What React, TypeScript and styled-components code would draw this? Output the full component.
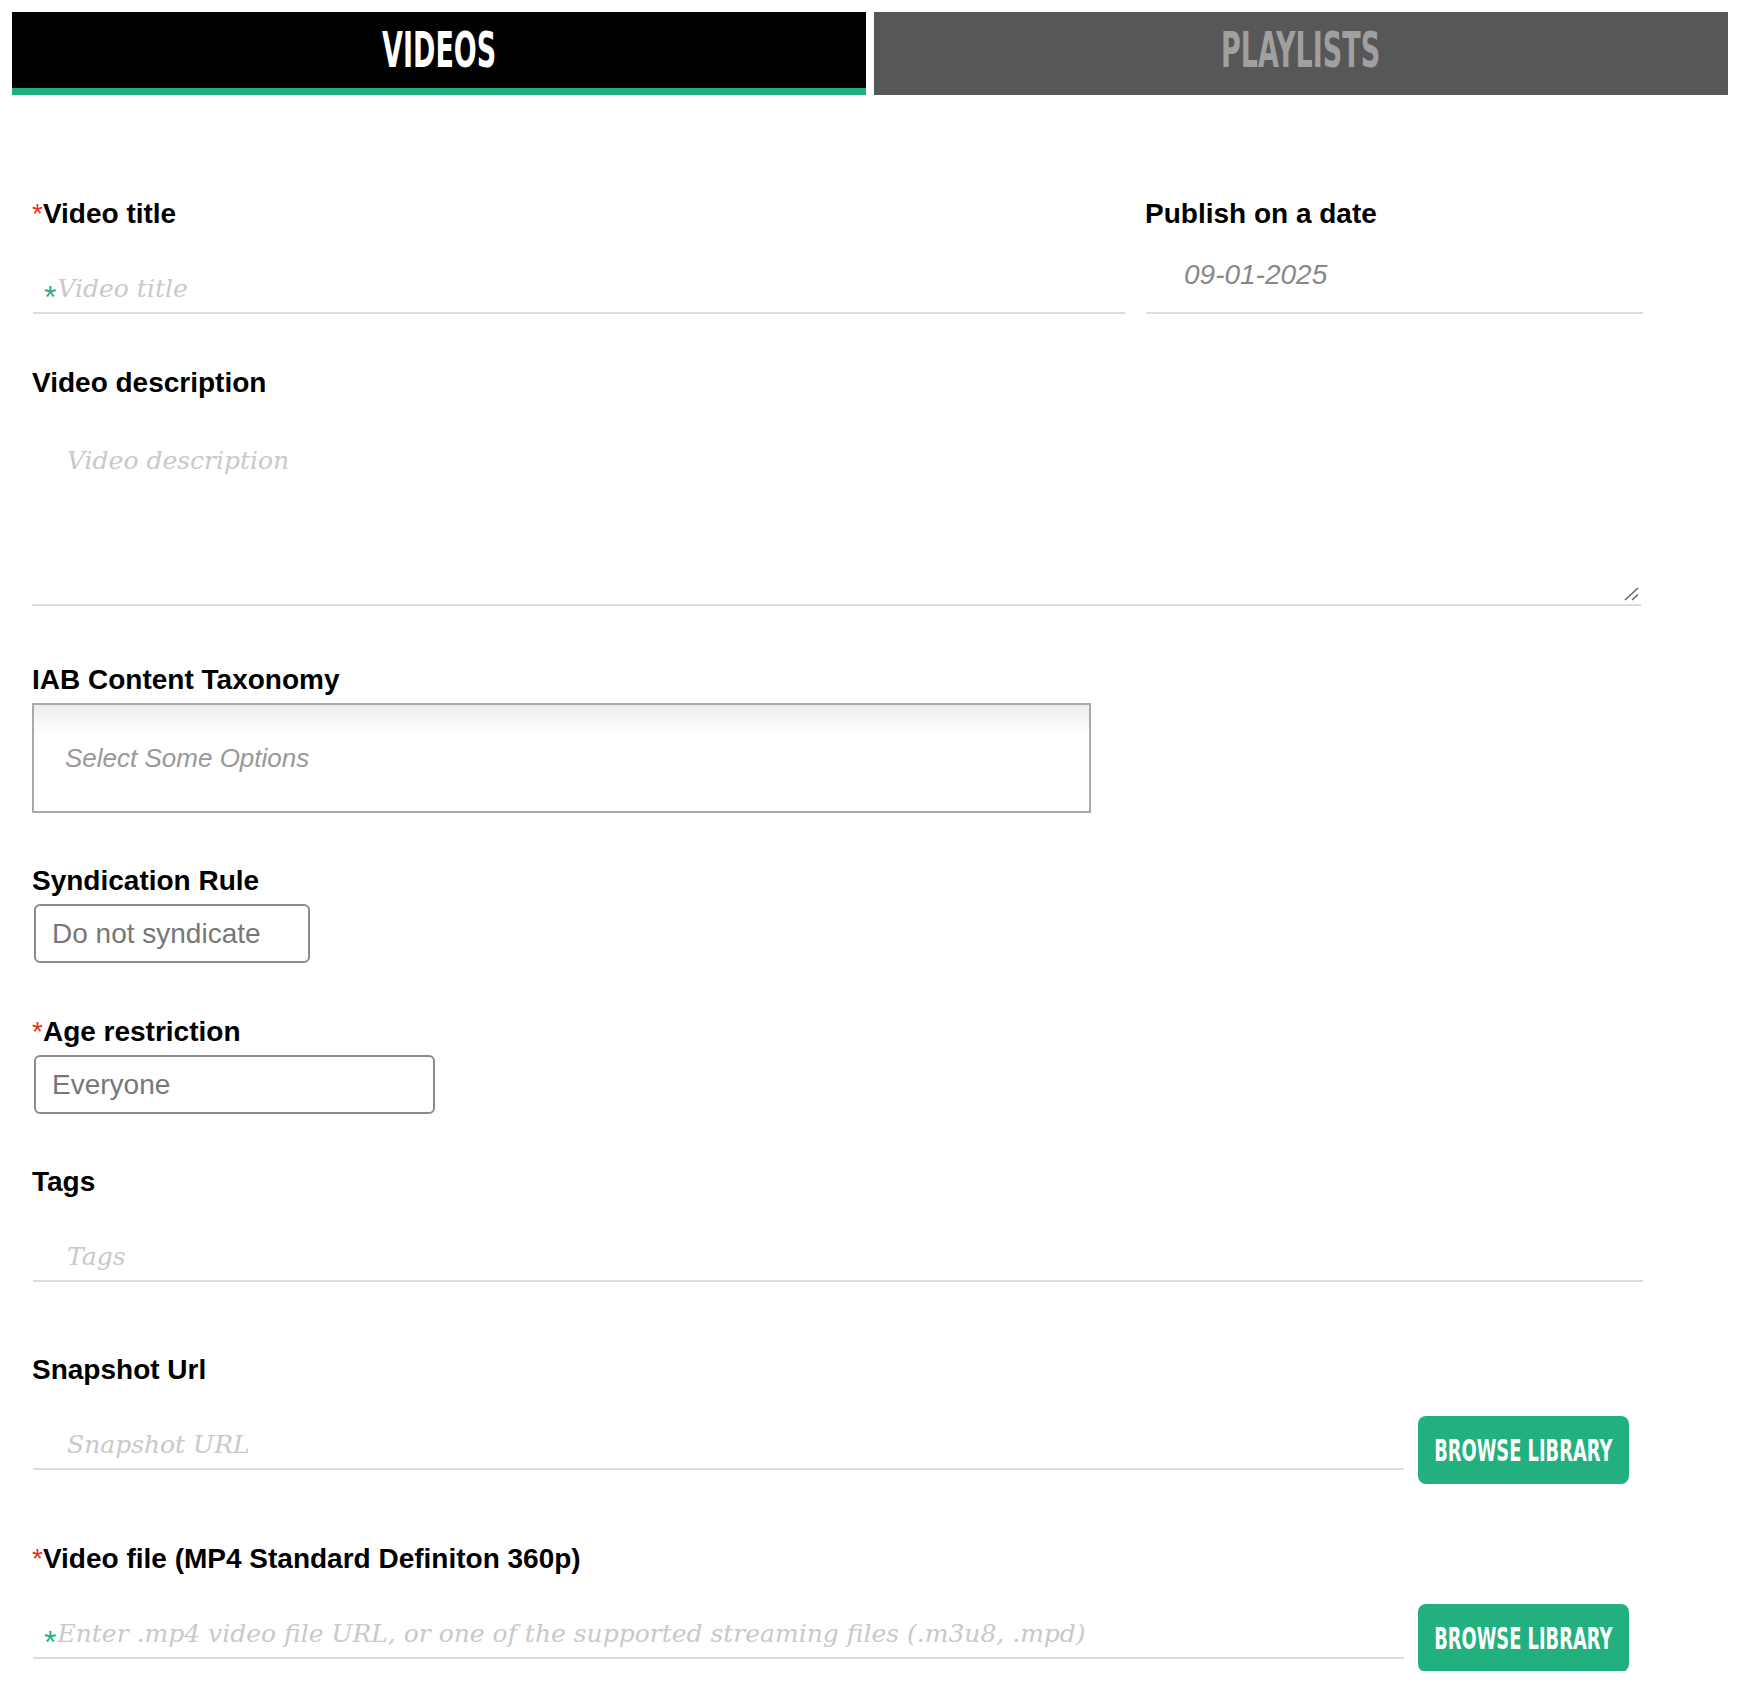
import React from 'react';
import styled, { createGlobalStyle } from 'styled-components';

const GREEN = '#22b07e';

const GlobalStyle = createGlobalStyle`
  body {
    margin: 0;
    background: #fff;
    font-family: "Liberation Sans", Arial, sans-serif;
  }
`;

const Page = styled.div`
  padding: 12px;
`;

// tabs
const Tabs = styled.div`
  display: flex;
  gap: 8px;
`;

const Tab = styled.div<{ active?: boolean }>`
  flex: 1;
  height: 83px;
  box-sizing: border-box;
  display: flex;
  align-items: center;
  justify-content: center;
  background: ${({ active }) => (active ? '#000' : '#575757')};
  border-bottom: ${({ active }) => (active ? '7px solid #20b07f' : 'none')};
  padding-bottom: ${({ active }) => (active ? '0' : '7px')};
`;

const Condensed = styled.span<{ size: number; scale: number; color: string }>`
  display: inline-block;
  flex-shrink: 0;
  font-family: "Liberation Sans Narrow", "DejaVu Sans Condensed", "Liberation Sans", sans-serif;
  font-weight: 700;
  font-size: ${({ size }) => size}px;
  line-height: 1;
  color: ${({ color }) => color};
  transform: scaleX(${({ scale }) => scale});
  white-space: nowrap;
`;

// form
const Form = styled.div`
  padding: 0 85px 0 20px;
  margin-top: 102px;
`;

const Section = styled.div<{ top?: number }>`
  margin-top: ${({ top }) => top ?? 0}px;
`;

const TopRow = styled.div`
  display: grid;
  grid-template-columns: 1fr 498px;
  gap: 20px;
`;

const Label = styled.div`
  font-size: 28px;
  font-weight: 700;
  line-height: 33px;
  color: #000;
`;

const Req = styled.span`
  color: #e8321e;
  font-weight: 400;
`;

const Field = styled.div<{ pl?: number; pb?: number }>`
  height: 84px;
  box-sizing: border-box;
  display: flex;
  align-items: flex-end;
  border-bottom: 2px solid #dddddd;
  padding-left: ${({ pl }) => pl ?? 34}px;
  padding-bottom: ${({ pb }) => pb ?? 11}px;
  margin-left: 1px;
`;

const Placeholder = styled.span`
  font-family: "DejaVu Serif", Georgia, serif;
  font-style: italic;
  font-size: 25px;
  line-height: 1;
  color: #c9c9c9;
  white-space: nowrap;
`;

const GreenStar = styled.span`
  color: ${GREEN};
  font-family: "Liberation Sans", sans-serif;
  font-style: normal;
  font-size: 32px;
  line-height: 0;
  vertical-align: -11px;
  margin-right: 1px;
`;

const DateText = styled.span`
  font-style: italic;
  font-size: 28px;
  line-height: 1;
  color: #888;
`;

const TextArea = styled.div`
  position: relative;
  height: 207px;
  box-sizing: border-box;
  border-bottom: 2px solid #dddddd;
  padding: 49px 0 0 35px;
  margin-right: 2px;
`;

const Grip = styled.svg`
  position: absolute;
  right: 1px;
  bottom: 3px;
`;

const MultiBox = styled.div`
  margin-top: 7px;
  width: 1059px;
  height: 110px;
  box-sizing: border-box;
  border: 2px solid #aaaaaa;
  background: linear-gradient(to bottom, #ececec 0, #ffffff 28px);
  display: flex;
  align-items: center;
  padding-left: 31px;
`;

const MultiPlaceholder = styled.span`
  font-style: italic;
  font-size: 26px;
  color: #999;
`;

const Select = styled.div<{ w: number }>`
  margin: 7px 0 0 2px;
  width: ${({ w }) => w}px;
  height: 59px;
  box-sizing: border-box;
  border: 2px solid #8b8b8b;
  border-radius: 6px;
  display: flex;
  align-items: center;
  padding-left: 16px;
  font-size: 28px;
  color: #777;
`;

const UrlRow = styled.div`
  display: flex;
  align-items: flex-end;
`;

const UrlField = styled(Field)`
  flex: 1;
`;

const BrowseButton = styled.div<{ drop: number }>`
  width: 211px;
  height: 68px;
  margin: 0 14px ${({ drop }) => -drop}px 14px;
  border-radius: 8px;
  background: ${GREEN};
  display: flex;
  align-items: center;
  justify-content: center;
  cursor: pointer;
`;

const App = () => (
  <Page>
    <GlobalStyle />
    <Tabs>
      <Tab active>
        <Condensed size={50} scale={0.6} color="#fff">VIDEOS</Condensed>
      </Tab>
      <Tab>
        <Condensed size={50} scale={0.6} color="#a0a0a0">PLAYLISTS</Condensed>
      </Tab>
    </Tabs>

    <Form>
      <TopRow>
        <div>
          <Label>
            <Req>*</Req>Video title
          </Label>
          <Field pl={11}>
            <Placeholder>
              <GreenStar>*</GreenStar>Video title
            </Placeholder>
          </Field>
        </div>
        <div>
          <Label>Publish on a date</Label>
          <Field pl={38} pb={23}>
            <DateText>09-01-2025</DateText>
          </Field>
        </div>
      </TopRow>

      <Section top={52}>
        <Label>Video description</Label>
        <TextArea>
          <Placeholder>Video description</Placeholder>
          <Grip width="16" height="14" viewBox="0 0 16 14">
            <path d="M1 13 L14 1 M8 13 L14 7.5" stroke="#666" strokeWidth="1.6" fill="none" />
          </Grip>
        </TextArea>
      </Section>

      <Section top={57}>
        <Label>IAB Content Taxonomy</Label>
        <MultiBox>
          <MultiPlaceholder>Select Some Options</MultiPlaceholder>
        </MultiBox>
      </Section>

      <Section top={51}>
        <Label>Syndication Rule</Label>
        <Select w={276}>Do not syndicate</Select>
      </Section>

      <Section top={52}>
        <Label>
          <Req>*</Req>Age restriction
        </Label>
        <Select w={401}>Everyone</Select>
      </Section>

      <Section top={51}>
        <Label>Tags</Label>
        <Field>
          <Placeholder>Tags</Placeholder>
        </Field>
      </Section>

      <Section top={71}>
        <Label>Snapshot Url</Label>
        <UrlRow>
          <UrlField>
            <Placeholder>Snapshot URL</Placeholder>
          </UrlField>
          <BrowseButton drop={14}>
            <Condensed size={31} scale={0.64} color="#fff">BROWSE LIBRARY</Condensed>
          </BrowseButton>
        </UrlRow>
      </Section>

      <Section top={72}>
        <Label>
          <Req>*</Req>Video file (MP4 Standard Definiton 360p)
        </Label>
        <UrlRow>
          <UrlField pl={11}>
            <Placeholder>
              <GreenStar>*</GreenStar>Enter .mp4 video file URL, or one of the supported streaming files (.m3u8, .mpd)
            </Placeholder>
          </UrlField>
          <BrowseButton drop={13}>
            <Condensed size={31} scale={0.64} color="#fff">BROWSE LIBRARY</Condensed>
          </BrowseButton>
        </UrlRow>
      </Section>
    </Form>
  </Page>
);

export default App;
